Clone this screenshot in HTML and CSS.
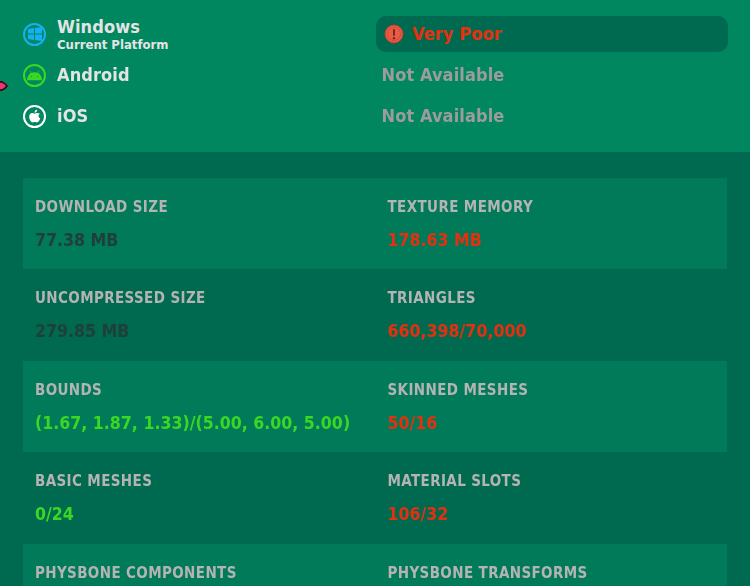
FILE: index.html
```html
<!DOCTYPE html>
<html lang="en">
<head>
<meta charset="utf-8">
<title>Performance</title>
<link rel="stylesheet" href="styles.css">
</head>
<body>
<div class="page">
  <svg class="pointer" width="8" height="14" viewBox="0 0 8 14"><path d="M-4 2.5 L2 3 Q5.5 4.5 7 7 Q5.5 9.5 2 11 L-4 11.5 Z" fill="#e8366f" stroke="#3a0a20" stroke-width="1.8"/></svg>
  <section class="platforms">
    <div class="platform">
      <span class="ring ring-win">
        <svg width="14" height="14" viewBox="0 0 14 14"><path fill="#14b0f2" d="M0 2 L6 1.1 V6.6 H0 Z M7 1 L14 0 V6.6 H7 Z M0 7.4 H6 V12.9 L0 12 Z M7 7.4 H14 V14 L7 13 Z"/></svg>
      </span>
      <div class="name-block">
        <div class="name">Windows</div>
        <div class="sub">Current Platform</div>
      </div>
    </div>
    <div class="rating rating-active">
      <svg class="warn" width="20" height="20" viewBox="0 0 20 20"><circle cx="10" cy="10" r="9" fill="#ea5a44" stroke="#b8412f" stroke-width="1"/><circle cx="10" cy="10" r="6.6" fill="none" stroke="#c9463a" stroke-width=".8"/><rect x="9" y="5" width="2" height="7" rx="1" fill="#7a2a20"/><circle cx="10" cy="14.3" r="1.2" fill="#7a2a20"/></svg>
      <span class="rating-poor">Very Poor</span>
    </div>
    <div class="platform">
      <span class="ring ring-android">
        <svg width="15" height="11" viewBox="0 0 14 10"><path fill="#3ad824" d="M0 9.4 C0.2 6 1.6 3.8 3.6 2.7 L2.5 0.8 L3 0.5 L4.2 2.4 C5.9 1.7 8.1 1.7 9.8 2.4 L11 0.5 L11.5 0.8 L10.4 2.7 C12.4 3.8 13.8 6 14 9.4 Z"/><circle cx="4.2" cy="6" r=".5" fill="#00875f"/><circle cx="9.8" cy="6" r=".5" fill="#00875f"/></svg>
      </span>
      <div class="name-block"><div class="name">Android</div></div>
    </div>
    <div class="rating"><span class="rating-none">Not Available</span></div>
    <div class="platform">
      <span class="ring ring-ios">
        <svg width="14" height="16" viewBox="0 0 14 16"><path fill="#fff" d="M9.6 0.4 C9.7 1.5 9.3 2.4 8.8 3 C8.2 3.7 7.3 4.2 6.5 4.1 C6.4 3.1 6.9 2.1 7.4 1.6 C8 0.9 9 0.4 9.6 0.4 Z M12.8 5.4 C11.8 6 11.2 7 11.2 8.1 C11.2 9.4 12 10.5 13.2 11 C12.9 11.9 12.5 12.7 12 13.4 C11.2 14.6 10.4 15.6 9.3 15.6 C8.2 15.6 7.9 15 6.7 15 C5.5 15 5.1 15.6 4.1 15.6 C3 15.6 2.2 14.5 1.4 13.3 C0 11.2 -0.4 8.3 0.7 6.5 C1.4 5.3 2.6 4.6 3.8 4.6 C4.9 4.6 5.8 5.3 6.7 5.3 C7.6 5.3 8.4 4.5 9.8 4.5 C10.9 4.5 12.1 4.9 12.8 5.4 Z"/></svg>
      </span>
      <div class="name-block"><div class="name">iOS</div></div>
    </div>
    <div class="rating"><span class="rating-none">Not Available</span></div>
  </section>
  <section class="stats">
    <div class="stat-row">
      <div class="stat"><div class="label">Download Size</div><div class="value value-dark">77.38 MB</div></div>
      <div class="stat"><div class="label">Texture Memory</div><div class="value value-bad">178.63 MB</div></div>
    </div>
    <div class="stat-row">
      <div class="stat"><div class="label">Uncompressed Size</div><div class="value value-dark">279.85 MB</div></div>
      <div class="stat"><div class="label">Triangles</div><div class="value value-bad">660,398/70,000</div></div>
    </div>
    <div class="stat-row">
      <div class="stat"><div class="label">Bounds</div><div class="value value-good">(1.67, 1.87, 1.33)/(5.00, 6.00, 5.00)</div></div>
      <div class="stat"><div class="label">Skinned Meshes</div><div class="value value-bad">50/16</div></div>
    </div>
    <div class="stat-row">
      <div class="stat"><div class="label">Basic Meshes</div><div class="value value-good">0/24</div></div>
      <div class="stat"><div class="label">Material Slots</div><div class="value value-bad">106/32</div></div>
    </div>
    <div class="stat-row">
      <div class="stat"><div class="label">PhysBone Components</div></div>
      <div class="stat"><div class="label">PhysBone Transforms</div></div>
    </div>
  </section>
</div>
</body>
</html>
```
FILE: styles.css
```css
* { box-sizing: border-box; }
html, body { margin: 0; padding: 0; background: #006a50; }
body { width: 750px; height: 586px; overflow: hidden; }
.page {
  position: relative;
  height: 586px;
  overflow: hidden;
  font-family: "DejaVu Sans", "Noto Sans", sans-serif;
  font-stretch: condensed;
  font-weight: 700;
  filter: blur(.35px);
}
.pointer { position: absolute; left: 0; top: 79px; z-index: 2; }
.platforms {
  background: #00875f;
  height: 152px;
  padding: 16px 23px 0;
  display: grid;
  grid-template-columns: 352.5px 352.5px;
  grid-auto-rows: 36px;
  row-gap: 5px;
}
.platform { display: flex; align-items: center; gap: 11px; }
.ring {
  width: 23px; height: 23px;
  flex: none;
  border-radius: 50%;
  border: 2px solid;
  display: flex; align-items: center; justify-content: center;
}
.ring-win { border-color: #14b0f2; }
.ring-android { border-color: #3ad824; }
.ring-ios { border-color: #fff; }
.ring-ios svg { transform: scale(.85); }
.name-block { display: flex; flex-direction: column; }
.name { color: #e4e4e4; font-size: 18px; line-height: 20px; letter-spacing: .1px; }
.sub { color: #e4e4e4; font-size: 13px; line-height: 15px; }
.rating {
  display: flex; align-items: center;
  padding: 0 0 1px 6px;
  font-size: 18px;
  letter-spacing: .1px;
  border-radius: 10px;
}
.rating-active { background: #006a50; padding-left: 8.5px; gap: 8px; }
.rating-poor { color: #e5300f; }
.rating-none { color: #9c9c9c; }
.stats { padding: 26px 23px 0; }
.stat-row {
  height: 91.4px;
  display: grid;
  grid-template-columns: 352px 352px;
}
.stat-row:nth-child(odd) { background: #007a59; }
.stat { padding: 19px 12px 0 12px; }
.stat + .stat { padding-left: 12.5px; }
.label {
  color: #b4b4b4;
  font-size: 15px;
  line-height: 20px;
  letter-spacing: .38px;
  text-transform: uppercase;
}
.value { margin-top: 12px; font-size: 17.6px; line-height: 22px; white-space: nowrap; }
.value-dark { color: #1f3f38; }
.value-bad { color: #e5300f; }
.value-good { color: #3ad824; }
```
